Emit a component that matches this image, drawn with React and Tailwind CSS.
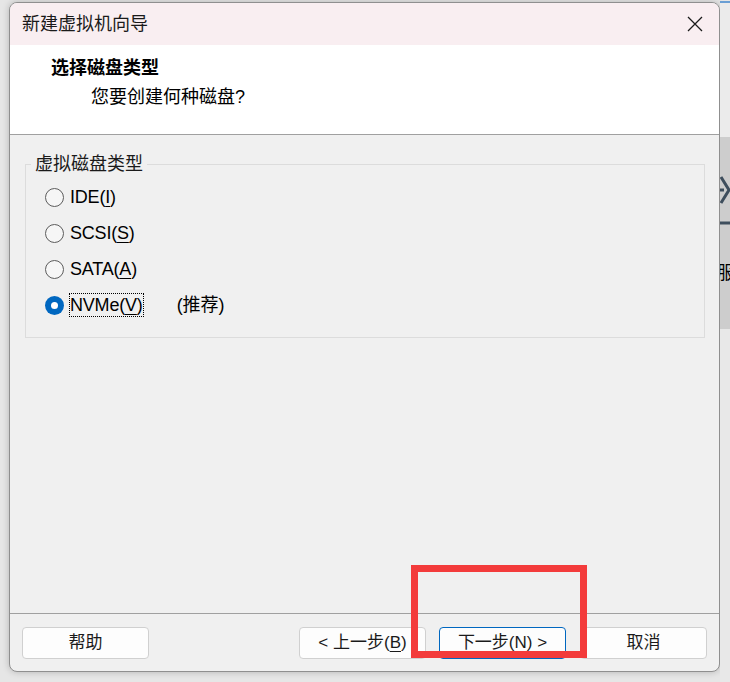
import React from 'react'

function Radio({ label, mnemonic, checked, focused, extra }) {
  const i = label.indexOf('(' + mnemonic + ')')
  const text = (
    <>
      {label.slice(0, i + 1)}
      <span className="underline underline-offset-[3px]">{mnemonic}</span>
      {label.slice(i + 2)}
    </>
  )
  return (
    <div className="h-[36px] flex items-center">
      {checked ? (
        <div className="w-[19px] h-[19px] rounded-full bg-[#0067c0] flex items-center justify-center shrink-0">
          <div className="w-[7px] h-[7px] rounded-full bg-white" />
        </div>
      ) : (
        <div className="w-[19px] h-[19px] rounded-full border border-[#5c5c5c] bg-[#f6f6f6] shrink-0" />
      )}
      <span className={'ml-[5px] leading-[22px] tracking-[-0.2px] ' + (focused ? 'border border-dotted border-black' : 'border border-transparent')}>
        {text}
      </span>
      {extra && <span className="ml-[33px]">{extra}</span>}
    </div>
  )
}

function Btn({ children, primary, className }) {
  return (
    <button
      className={
        'h-[32px] w-[127px] rounded-[4px] bg-[#fdfdfd] text-[17px] text-[#1a1a1a] flex items-center justify-center border ' +
        (primary ? 'border-[#0067c0]' : 'border-[#d0d0d0]') +
        ' ' + (className || '')
      }
    >
      {children}
    </button>
  )
}

export default function App() {
  return (
    <div className="w-[730px] h-[682px] bg-[#e6e6e6] flex overflow-hidden relative font-['Liberation_Sans','Noto_Sans_CJK_SC',sans-serif] text-black">
      {/* dialog */}
      <div className="mt-[2px] ml-[9px] w-[711px] h-[670px] shrink-0 rounded-[8px] border border-[#8f8f8f] overflow-hidden flex flex-col bg-[#f0f0f0] shadow-[0_0_7px_rgba(0,0,0,0.22)]">
        <div className="h-[42px] shrink-0 bg-[#f9eef1] flex items-center justify-between pl-[12px] pr-[16px]">
          <span className="text-[18px] text-[#1a1a1a]">新建虚拟机向导</span>
          <svg width="16" height="16" viewBox="0 0 16 16" fill="none">
            <path d="M1 1L15 15M15 1L1 15" stroke="#1a1a1a" strokeWidth="1.3" />
          </svg>
        </div>

        <div className="h-[90px] shrink-0 bg-white border-b border-[#a0a0a0] pt-[11px]">
          <p className="pl-[41px] text-[18px] leading-[24px] font-bold">选择磁盘类型</p>
          <p className="pl-[81px] mt-[5px] text-[18px] leading-[24px]">您要创建何种磁盘?</p>
        </div>

        <div className="flex-1 pt-[17px]">
          <fieldset className="ml-[15px] mr-[14px] border border-[#dcdcdc] pl-[19px] pt-[3px] pb-[14px] text-[18px]">
            <legend className="-ml-[14px] px-[4px] leading-[24px] text-[#1a1a1a]">虚拟磁盘类型</legend>
            <Radio label="IDE(I)" mnemonic="I" />
            <Radio label="SCSI(S)" mnemonic="S" />
            <Radio label="SATA(A)" mnemonic="A" />
            <Radio label="NVMe(V)" mnemonic="V" checked focused extra="(推荐)" />
          </fieldset>
        </div>

        <div className="shrink-0 border-t border-[#a0a0a0] pt-[13px] pb-[12px] px-[12px] flex">
          <Btn>帮助</Btn>
          <Btn className="ml-auto">
            &lt; 上一步(<span className="underline underline-offset-[3px]">B</span>)
          </Btn>
          <Btn primary className="ml-[13px]">下一步(N) &gt;</Btn>
          <Btn className="ml-[14px]">取消</Btn>
        </div>
      </div>

      {/* app behind the dialog */}
      <div className="w-[10px] shrink-0 flex flex-col">
        <div className="h-[136px] bg-[#ebebeb] border-t-2 border-[#6a9fd4] mt-[1px]" />
        <div className="h-[192px] bg-[#cdcdcd] flex flex-col overflow-hidden">
          <svg width="10" height="100" viewBox="0 0 10 100" fill="none" className="shrink-0">
            <path d="M1 40L9 53L1 66" stroke="#3e4e5d" strokeWidth="3" />
            <path d="M0 53H4" stroke="#3e4e5d" strokeWidth="3" />
            <path d="M0 86H10" stroke="#3e4e5d" strokeWidth="3" />
          </svg>
          <span className="text-[18px] leading-[24px] mt-[24px] -ml-[3px] whitespace-nowrap">服</span>
        </div>
        <div className="flex-1 bg-[#e8e8e8]" />
      </div>

      {/* annotation */}
      <div className="absolute left-[411px] top-[565px] w-[176px] h-[93px] border-[7px] border-[#f33b3b]" />
    </div>
  )
}
